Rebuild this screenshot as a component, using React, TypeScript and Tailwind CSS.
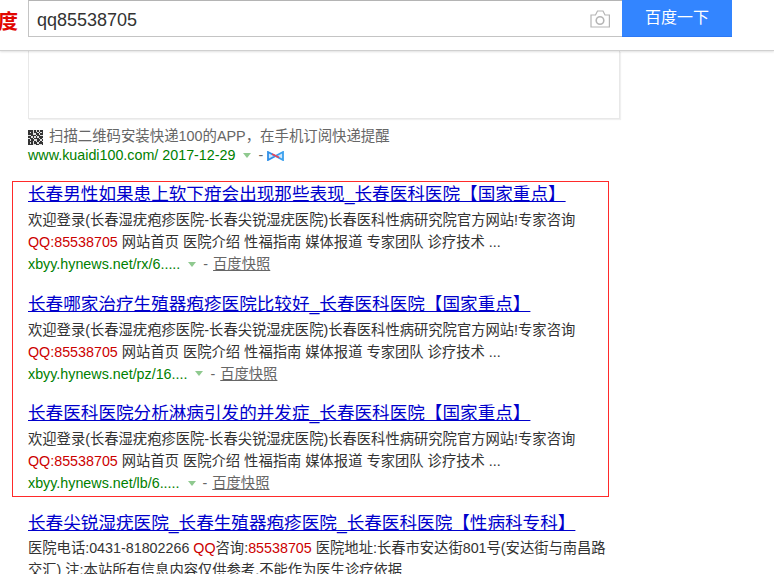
const qrCells = [
  '1110101011',
  '1010110101',
  '1110011011',
  '0011101100',
  '1101010111',
  '0110111010',
  '1011001101',
  '1110101010',
  '1010110111',
  '1110011001',
];

function QrIcon() {
  return (
    <svg width="15" height="15" viewBox="0 0 10 10" shapeRendering="crispEdges" className="shrink-0">
      <rect width="10" height="10" fill="#333" />
      {qrCells.map((row, y) =>
        row.split('').map((c, x) => (c === '0' ? <rect key={`${x}-${y}`} x={x} y={y} width="1" height="1" fill="#ddd" /> : null))
      )}
    </svg>
  );
}

function BowIcon() {
  return (
    <svg width="17" height="10" viewBox="0 0 17 10" className="inline-block">
      <path d="M1 1 L8.5 5 L1 9 Z" fill="#cfe6fb" stroke="#2f8fe8" strokeWidth="1.8" />
      <path d="M16 1 L8.5 5 L16 9 Z" fill="#cfe6fb" stroke="#3aa0ee" strokeWidth="1.8" />
      <path d="M5 3 L12 6.5" stroke="#e8455a" strokeWidth="1.6" />
    </svg>
  );
}

function CameraIcon() {
  return (
    <svg width="20" height="18" viewBox="0 0 20 18" fill="none" stroke="#b5b5b5" strokeWidth="1.2">
      <path d="M1 5 H5.5 L7.5 1 H13 L15 5 H19.4 V17 H1 Z" />
      <circle cx="10" cy="10.5" r="3.8" strokeWidth="1.6" />
    </svg>
  );
}

function Arrow() {
  return <span className="inline-block w-0 h-0 border-x-[4px] border-x-transparent border-t-[5px] border-t-[#8fc98f]" />;
}

function Result({ title, url }: { title: string; url: string }) {
  return (
    <div className="mb-[17.5px] last:mb-0">
      <a className="block h-[22px] mb-[4px] text-[17.6px] leading-[22px] text-[#0000cc] underline whitespace-nowrap">{title}</a>
      <div className="text-[14.3px] leading-[22px] text-[#333]">
        <div className="whitespace-nowrap">欢迎登录(长春湿疣疱疹医院-长春尖锐湿疣医院)长春医科性病研究院官方网站!专家咨询</div>
        <div className="whitespace-nowrap">
          <span className="text-[#cc0000]">QQ:85538705</span> 网站首页 医院介绍 性福指南 媒体报道 专家团队 诊疗技术 ...
        </div>
        <div className="flex items-center whitespace-nowrap">
          <span className="text-[#008000]">{url}</span>
          <span className="flex ml-[8px]"><Arrow /></span>
          <span className="ml-[7px] text-[#666]">-</span>
          <a className="ml-[5px] text-[#666] underline">百度快照</a>
        </div>
      </div>
    </div>
  );
}

export default function App() {
  return (
    <div className="h-[574px] overflow-hidden bg-white font-['Liberation_Sans','Noto_Sans_CJK_SC',sans-serif]">
      {/* Search header */}
      <header className="relative z-10 h-[51px] flex items-start bg-white border-b border-[#d0d0d0] shadow-[0_1px_2px_rgba(0,0,0,0.12)]">
        <div className="w-[28px] h-[37px] overflow-hidden flex justify-end pr-[10px] text-[20px] leading-[44px] font-bold text-[#e10601] whitespace-nowrap">
          百度
        </div>
        <div className="w-[594px] h-[37px] flex items-center justify-between pl-[8px] pr-[12px] border border-l border-r-0 border-t-[#b4b4b4] border-b-[#c4c4c4] border-l-[#c4c4c4] text-[18px] text-[#333]">
          <span className="pt-[3px]">qq85538705</span>
          <CameraIcon />
        </div>
        <button className="w-[110px] h-[37px] bg-[#3385ff] border-b border-[#2d78f4] text-white text-[16px]">百度一下</button>
      </header>

      {/* Results */}
      <main className="ml-[28px] w-[592px]">
        <div className="h-[68px] bg-white border-x border-b border-[#e8e8e8] shadow-[1px_1px_1px_rgba(0,0,0,0.06)]" />

        <div className="mt-[8px] flex items-center gap-[6px] h-[20px] text-[14.4px] text-[#666] whitespace-nowrap">
          <QrIcon />
          <span>扫描二维码安装快递100的APP，在手机订阅快递提醒</span>
        </div>
        <div className="flex items-center h-[17px] text-[14.3px] whitespace-nowrap">
          <span className="text-[#008000]">www.kuaidi100.com/ 2017-12-29</span>
          <span className="ml-[8px] flex"><Arrow /></span>
          <span className="ml-[7px] text-[#666]">-</span>
          <span className="ml-[4px] flex"><BowIcon /></span>
        </div>

        <div className="mt-[17px] -ml-[16px] w-[597px] h-[316px] pt-[1px] pl-[15px] border border-[#ff2a2a]">
          <Result title="长春男性如果患上软下疳会出现那些表现_长春医科医院【国家重点】" url="xbyy.hynews.net/rx/6....." />
          <Result title="长春哪家治疗生殖器疱疹医院比较好_长春医科医院【国家重点】" url="xbyy.hynews.net/pz/16...." />
          <Result title="长春医科医院分析淋病引发的并发症_长春医科医院【国家重点】" url="xbyy.hynews.net/lb/6....." />
        </div>

        <a className="block mt-[15px] h-[22px] mb-[3px] text-[17.6px] leading-[22px] text-[#0000cc] underline whitespace-nowrap">
          长春尖锐湿疣医院_长春生殖器疱疹医院_长春医科医院【性病科专科】
        </a>
        <div className="w-[584px] text-[14.3px] leading-[22px] text-[#333]">
          医院电话:0431-81802266 <span className="text-[#cc0000]">QQ</span>咨询:<span className="text-[#cc0000]">85538705</span> 医院地址:长春市安达街801号(安达街与南昌路交汇) 注:本站所有信息内容仅供参考,不能作为医生诊疗依据
        </div>
      </main>
    </div>
  );
}
